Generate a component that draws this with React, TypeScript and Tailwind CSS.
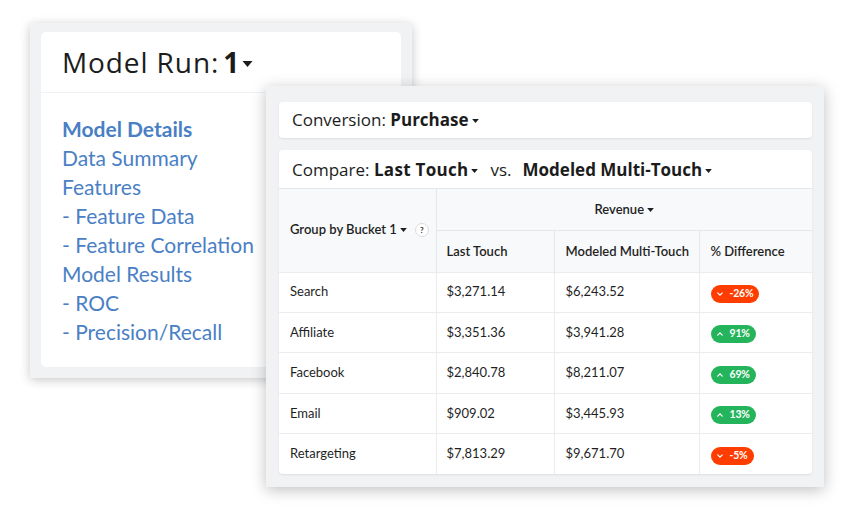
import React from "react";

const sans = { fontFamily: '"Open Sans", "Noto Sans", sans-serif' };

function Caret({ className = "" }: { className?: string }) {
  return (
    <svg viewBox="0 0 10 6" className={className} aria-hidden>
      <path d="M0 0h10L5 6z" fill="currentColor" />
    </svg>
  );
}

function Badge({ value, up }: { value: string; up: boolean }) {
  return (
    <span
      className={`inline-flex h-[18px] items-center gap-[7px] rounded-full pl-[6px] pr-[6px] text-[10.5px] font-bold tracking-[-0.2px] text-white ${
        up ? "bg-[#24b55c]" : "bg-[#ff3d00]"
      }`}
    >
      <svg viewBox="0 0 8 5" className="h-[4px] w-[6px]" aria-hidden>
        <path
          d={up ? "M1 4l3-3 3 3" : "M1 1l3 3 3-3"}
          fill="none"
          stroke="currentColor"
          strokeWidth="1.6"
          strokeLinecap="round"
        />
      </svg>
      {value}
    </span>
  );
}

const links = [
  "Data Summary",
  "Features",
  "- Feature Data",
  "- Feature Correlation",
  "Model Results",
  "- ROC",
  "- Precision/Recall",
];

const rows = [
  { name: "Search", last: "$3,271.14", multi: "$6,243.52", diff: "-26%", up: false },
  { name: "Affiliate", last: "$3,351.36", multi: "$3,941.28", diff: "91%", up: true },
  { name: "Facebook", last: "$2,840.78", multi: "$8,211.07", diff: "69%", up: true },
  { name: "Email", last: "$909.02", multi: "$3,445.93", diff: "13%", up: true },
  { name: "Retargeting", last: "$7,813.29", multi: "$9,671.70", diff: "-5%", up: false },
];

export default function App() {
  return (
    <div className="relative h-[509px] w-[855px] overflow-hidden bg-white text-[#222]" style={{ fontFamily: "Lato, sans-serif" }}>
      {/* model run window */}
      <div className="absolute left-[30px] top-[23px] flex h-[355px] w-[382px] flex-col gap-px bg-[#f1f2f4] px-[11px] pb-[11px] pt-[9px] shadow-[0_2px_10px_rgba(0,0,0,0.22)]">
        <div className="flex h-[60px] items-center rounded-t-[5px] bg-white px-[21px] text-[#1c1c1c]">
          <span className="whitespace-nowrap text-[28px] leading-none tracking-[0.9px]" style={sans}>
            Model Run:
          </span>
          <b className="ml-[4px] text-[28px] font-bold leading-none tracking-[-1px]" style={sans}>
            1
          </b>
          <Caret className="ml-[4px] mt-[3px] h-[6px] w-[11px]" />
        </div>
        <div className="flex flex-1 flex-col rounded-b-[5px] bg-white px-[21px] pt-[21px] text-[21px] leading-[29px] text-[#4a7fc5]">
          <span className="font-bold">Model Details</span>
          {links.map((l) => (
            <span key={l} className="whitespace-nowrap">{l}</span>
          ))}
        </div>
      </div>

      {/* attribution window */}
      <div className="absolute left-[266px] top-[86px] flex h-[401px] w-[558px] flex-col gap-[12px] bg-[#f1f2f4] pb-[13px] pl-[13px] pr-[12px] pt-[16px] shadow-[0_3px_14px_rgba(0,0,0,0.25)]">
        <div className="flex h-[36px] items-center rounded-[4px] bg-white px-[13px] text-[17px] text-[#1c1c1c] shadow-[0_1px_2px_rgba(0,0,0,0.08)]" style={sans}>
          <span>Conversion:&nbsp;</span>
          <b className="font-bold">Purchase</b>
          <Caret className="ml-[3px] mt-[2px] h-[4px] w-[7px]" />
        </div>
        <div className="flex flex-1 flex-col overflow-hidden rounded-[4px] bg-white shadow-[0_1px_2px_rgba(0,0,0,0.08)]">
          <div className="flex h-[38px] items-center whitespace-nowrap px-[13px] pt-[2px] text-[17px] text-[#1c1c1c]" style={sans}>
            <span>Compare:&nbsp;</span>
            <b className="font-bold tracking-[0.3px]">Last Touch</b>
            <Caret className="ml-[3px] mt-[2px] h-[4px] w-[7px]" />
            <span className="ml-[12px]">vs.</span>
            <b className="ml-[11px] font-bold">Modeled Multi-Touch</b>
            <Caret className="ml-[3px] mt-[2px] h-[4px] w-[7px]" />
          </div>
          <table className="w-full table-fixed border-collapse whitespace-nowrap text-[13px] text-[#1f1f1f]">
            <colgroup>
              <col className="w-[157px]" />
              <col className="w-[118px]" />
              <col className="w-[145px]" />
              <col />
            </colgroup>
            <thead className="bg-[#f8f9fa]">
              <tr className="h-[42px]">
                <th rowSpan={2} className="border-r border-t border-[#e6e7e9] px-[11px] text-left text-[13px] font-semibold">
                  <span className="inline-flex items-center">
                    Group by Bucket 1
                    <Caret className="ml-[3px] h-[4px] w-[7px]" />
                    <span className="ml-[8px] inline-flex h-[14px] w-[14px] items-center justify-center rounded-full border border-[#dcdcde] bg-white text-[8px] font-bold text-[#333]">
                      ?
                    </span>
                  </span>
                </th>
                <th colSpan={3} className="border-b border-t border-[#e6e7e9] pt-[2px] text-center font-semibold">
                  <span className="inline-flex items-center">
                    Revenue
                    <Caret className="ml-[3px] h-[4px] w-[7px]" />
                  </span>
                </th>
              </tr>
              <tr className="h-[42px] text-left font-semibold">
                <th className="border-r border-[#e6e7e9] px-[10px] pt-[2px] font-semibold">Last Touch</th>
                <th className="border-r border-[#e6e7e9] px-[11px] pt-[2px] font-semibold">Modeled Multi-Touch</th>
                <th className="px-[11px] pt-[2px] font-semibold">% Difference</th>
              </tr>
            </thead>
            <tbody>
              {rows.map((r) => (
                <tr key={r.name} className="h-[40.4px] border-t border-[#ececee]">
                  <td className="border-r border-[#ececee] px-[11px]">{r.name}</td>
                  <td className="border-r border-[#ececee] px-[10px]">{r.last}</td>
                  <td className="border-r border-[#ececee] px-[11px]">{r.multi}</td>
                  <td className="px-[11px]">
                    <Badge value={r.diff} up={r.up} />
                  </td>
                </tr>
              ))}
            </tbody>
          </table>
        </div>
      </div>
    </div>
  );
}
